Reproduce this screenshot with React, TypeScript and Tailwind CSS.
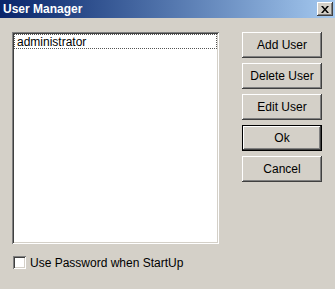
import React from "react";

const raised =
  "shadow-[inset_-1px_-1px_0_#404040,inset_1px_1px_0_#ffffff,inset_-2px_-2px_0_#808080,inset_2px_2px_0_#d4d0c8]";

function Btn({ label, def }: { label: string; def?: boolean }) {
  return (
    <div className={def ? "border border-black h-[26px]" : "h-[26px]"}>
      <button
        className={`w-full h-full bg-[#d4d0c8] ${raised} text-[12px] text-black leading-none flex items-center justify-center`}
        style={{ fontFamily: '"Liberation Sans", Arial, sans-serif' }}
      >
        {label}
      </button>
    </div>
  );
}

export default function App() {
  return (
    <div
      className="w-[335px] h-[289px] bg-[#d4d0c8] flex flex-col overflow-hidden"
      style={{ fontFamily: '"Liberation Sans", Arial, sans-serif' }}
    >
      <div className="h-[18px] flex items-center justify-between pl-[3px] pr-[2px] bg-gradient-to-r from-[#0a246a] to-[#a6caf0]">
        <span className="text-white font-bold text-[12px] leading-none">User Manager</span>
        <div className={`w-[16px] h-[14px] bg-[#d4d0c8] ${raised} flex items-center justify-center`}>
          <svg width="8" height="7" viewBox="0 0 8 7">
            <path d="M0 0h2l2 2.5L6 0h2L5 3.5 8 7H6L4 4.5 2 7H0l3-3.5z" fill="#000" />
          </svg>
        </div>
      </div>
      <div className="flex pt-[14px] pl-[12px]">
        <div className="flex flex-col">
          <div className="w-[207px] h-[212px] bg-white p-[2px] shadow-[inset_1px_1px_0_#808080,inset_-1px_-1px_0_#ffffff,inset_2px_2px_0_#404040,inset_-2px_-2px_0_#d4d0c8]">
            <div className="h-[15px] border border-dotted border-[#555] flex items-center pl-[2px] text-[12px] text-black leading-none">
              administrator
            </div>
          </div>
          <div className="flex items-center mt-[12px] ml-[1px]">
            <div className="w-[13px] h-[13px] bg-white shadow-[inset_1px_1px_0_#808080,inset_-1px_-1px_0_#ffffff,inset_2px_2px_0_#404040,inset_-2px_-2px_0_#d4d0c8]" />
            <span className="ml-[4px] text-[12px] text-black leading-none">Use Password when StartUp</span>
          </div>
        </div>
        <div className="ml-[23px] w-[80px] flex flex-col gap-[5px]">
          <Btn label="Add User" />
          <Btn label="Delete User" />
          <Btn label="Edit User" />
          <Btn label="Ok" def />
          <Btn label="Cancel" />
        </div>
      </div>
    </div>
  );
}
